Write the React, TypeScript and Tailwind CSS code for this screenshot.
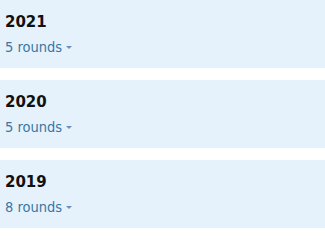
import React from 'react';

type Season = {
    year: string
    rounds: number
}

const seasons: Array<Season> = [
    { year: "2021", rounds: 5 },
    { year: "2020", rounds: 5 },
    { year: "2019", rounds: 8 },
];

function SeasonCard({ season }: { season: Season }) {
    return (
        <div className="bg-[#e6f2fb] h-[68px] px-[5px] pt-[14px]">
            <h3 className="text-[15px] leading-[17px] font-bold text-[#111] font-['DejaVu_Sans',sans-serif]">{season.year}</h3>
            <button className="mt-[8px] flex items-center text-[14.5px] leading-[16px] text-[#3a76a3]">
                <span>{season.rounds} rounds</span>
                <svg className="ml-[4px] mt-[1px] w-[6px] h-[3px] text-[#6a8dbd]" viewBox="0 0 6 3" fill="currentColor">
                    <polygon points="0,0 6,0 3,3" />
                </svg>
            </button>
        </div>
    );
}

export default function App() {
    return (
        <div className="w-[325px] h-[228px] overflow-hidden bg-white flex flex-col gap-3" style={{ fontFamily: '"DejaVu Sans Condensed", Tahoma, "DejaVu Sans", sans-serif' }}>
            {seasons.map((s) => <SeasonCard key={s.year} season={s} />)}
        </div>
    );
}
